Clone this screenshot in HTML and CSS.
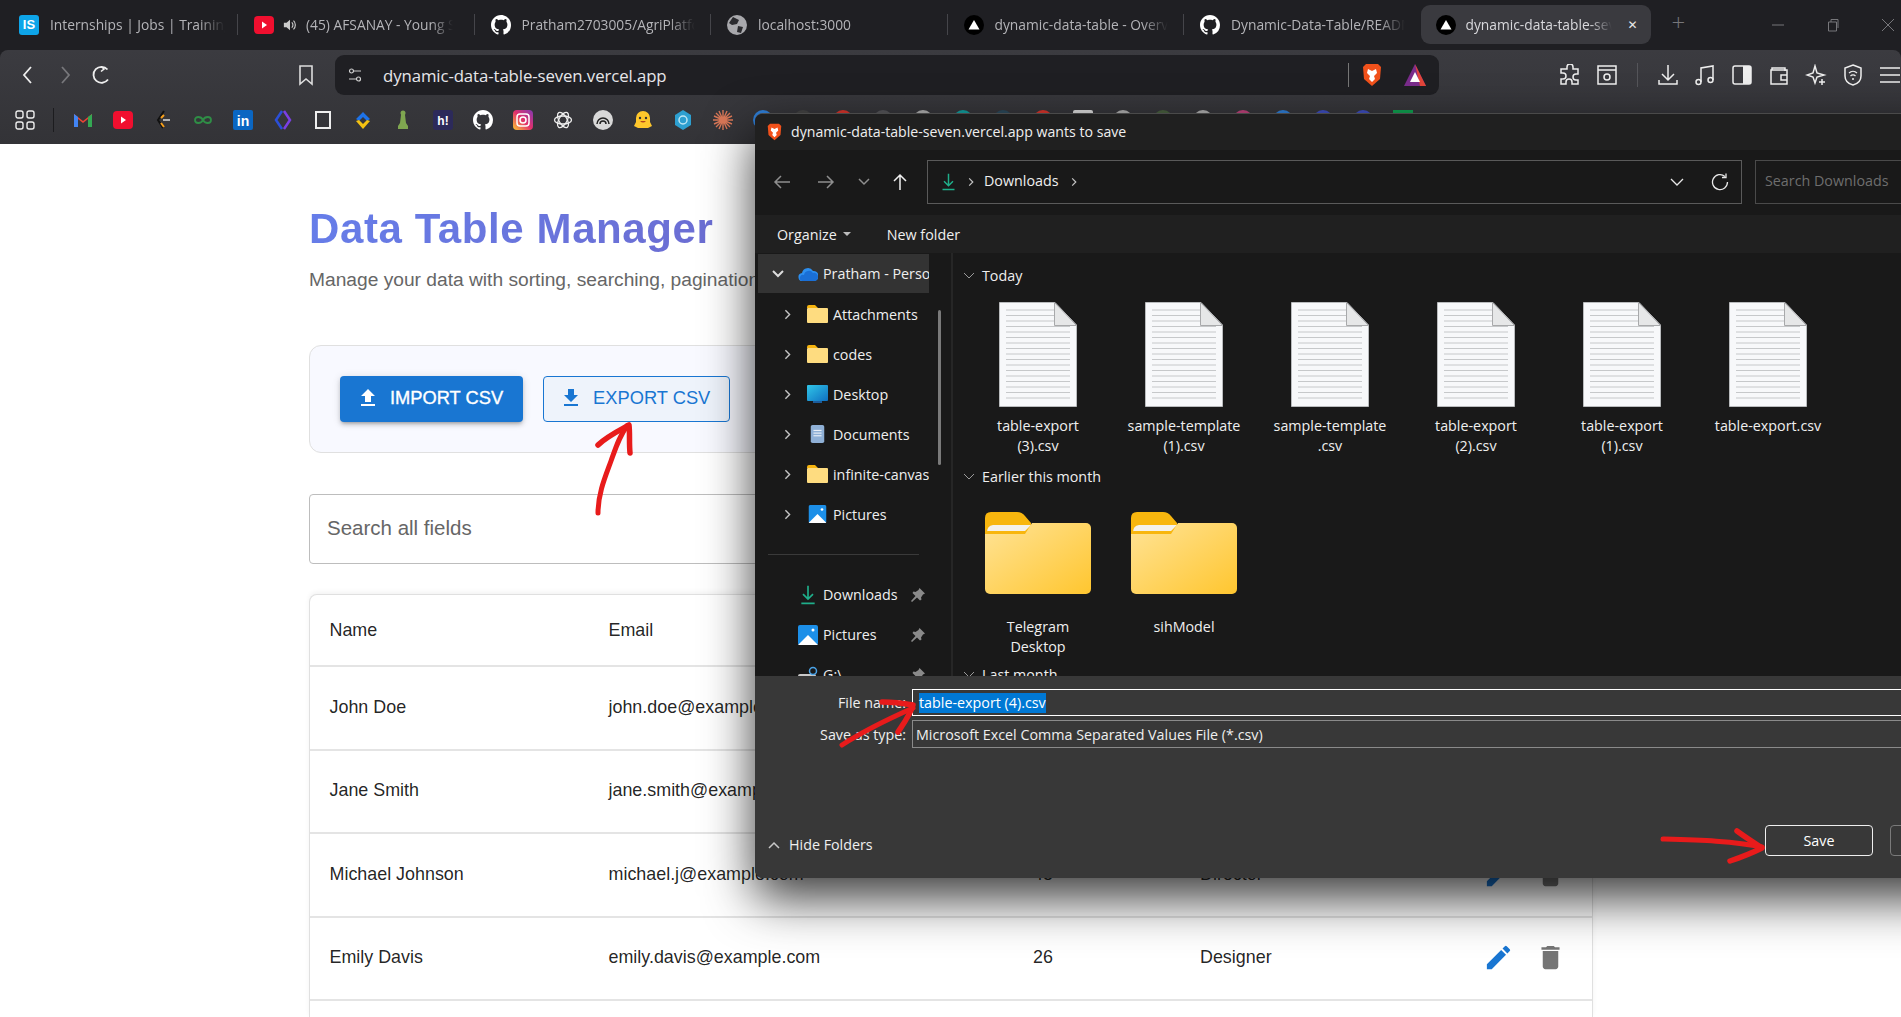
FILE: index.html
```html
<!DOCTYPE html>
<html lang="en">
<head>
<meta charset="utf-8">
<title>Data Table Manager</title>
<link rel="stylesheet" href="styles.css">
</head>
<body>
<svg class="sprites" width="0" height="0" aria-hidden="true">
  <defs>
    <symbol id="gh" viewBox="0 0 16 16"><path fill="currentColor" d="M8 0C3.58 0 0 3.58 0 8c0 3.54 2.29 6.53 5.47 7.59.4.07.55-.17.55-.38 0-.19-.01-.82-.01-1.49-2.01.37-2.53-.49-2.69-.94-.09-.23-.48-.94-.82-1.13-.28-.15-.68-.52-.01-.53.63-.01 1.08.58 1.23.82.72 1.21 1.87.87 2.33.66.07-.52.28-.87.51-1.07-1.78-.2-3.64-.89-3.64-3.95 0-.87.31-1.59.82-2.15-.08-.2-.36-1.02.08-2.12 0 0 .67-.21 2.2.82.64-.18 1.32-.27 2-.27.68 0 1.36.09 2 .27 1.53-1.04 2.2-.82 2.2-.82.44 1.1.16 1.92.08 2.12.51.56.82 1.27.82 2.15 0 3.07-1.87 3.75-3.65 3.95.29.25.54.73.54 1.48 0 1.07-.01 1.93-.01 2.2 0 .21.15.46.55.38A8.013 8.013 0 0016 8c0-4.42-3.58-8-8-8z"/></symbol>
    <symbol id="vercel" viewBox="0 0 20 20"><circle cx="10" cy="10" r="10" fill="#000"/><path d="M10 5l5.5 9.5h-11z" fill="#fff"/></symbol>
    <symbol id="yt" viewBox="0 0 20 20"><rect y="1" width="20" height="18" rx="4" fill="#f00f2f"/><path d="M8 6.500l5 3.500-5 3.500z" fill="#fff"/></symbol>
    <symbol id="lion" viewBox="0 0 20 24"><path d="M4 1h12l3 3-1 12-8 7-8-7L1 4z" fill="#f1511b"/><path d="M6 6l4 2 4-2 1 4-3 3 1 3-3 3-3-3 1-3-3-3z" fill="#fff"/></symbol>
    <symbol id="file" viewBox="0 0 78 105">
      <path d="M.5.5H56L77.500 23V104.500H.5z" fill="#f7f8fa" stroke="#b9bbbd"/>
      <path d="M7 8h48M7 13.500h48M7 19h48M7 24.500h64M7 30h64M7 35.500h64M7 41h64M7 46.500h64M7 52h64M7 57.500h64M7 63h64M7 68.500h64M7 74h64M7 79.500h64M7 85h64M7 90.500h64M7 96h64" stroke="#c6c8ca" fill="none"/>
      <path d="M55.500.5V23.500H77.500z" fill="#e6e7e8" stroke="#a8a9ab"/>
    </symbol>
    <symbol id="folder" viewBox="0 0 106 82">
      <path d="M0 6q0-6 6-6h26q5 0 8 4l6 7v30H0z" fill="#f8b60e"/>
      <path d="M2 20q0-6 6-7h38l-6 6H2z" fill="#f4f1ea"/>
      <rect y="11" width="106" height="71" rx="5" fill="url(#fg)" clip-path="url(#fc)"/>
      <linearGradient id="fg" x1="0" y1="0" x2="1" y2="1"><stop offset="0" stop-color="#ffe396"/><stop offset="1" stop-color="#ffc62f"/></linearGradient>
      <clipPath id="fc"><path d="M40 22l7-11h59v71H0V22z"/></clipPath>
    </symbol>
    <symbol id="minifolder" viewBox="0 0 21 18"><path d="M0 2q0-2 2-2h6l3 3H0z" fill="#f6b40e"/><rect y="3" width="21" height="15" rx="1" fill="#fedc80"/></symbol>
    <symbol id="pics" viewBox="0 0 20 20"><rect width="20" height="20" rx="2" fill="#1c8fe8"/><path d="M0 20l10-10 10 10z" fill="#fff"/><circle cx="15" cy="5" r="1.500" fill="#fff"/></symbol>
    <symbol id="pin" viewBox="0 0 16 16"><path d="M9.500 1l5.500 5.500-2 1-2 3 .5 2-1.500 1-3-3L2 15l-1-1 4.500-5-3-3 1-1.500 2 .5 3-2z" fill="#8a8a8a"/></symbol>
    <symbol id="gt" viewBox="0 0 10 16"><path d="M2 2l6 6-6 6" fill="none" stroke="#c4c4c4" stroke-width="2"/></symbol>
    <symbol id="dl" viewBox="0 0 20 24"><path d="M10 1v15M4 11l6 6 6-6M2 22h16" fill="none" stroke="#1fae8a" stroke-width="2"/></symbol>
  </defs>
</svg>

<header class="chrome">
  <div class="tabstrip">
    <div class="tab tab-first">
      <span class="fav-is">IS</span><span class="tab-title">Internships | Jobs | Training</span>
    </div>
    <div class="tab tab-audio">
      <svg class="fav"><use href="#yt"/></svg>
      <svg class="speaker" viewBox="0 0 16 16"><path d="M1 5.500h3l4-3.500v12l-4-3.500H1z" fill="#ccc"/><path d="M10 5a4 4 0 010 6M12 3a7 7 0 010 10" fill="none" stroke="#ccc" stroke-width="1.300"/></svg>
      <span class="tab-title">(45) AFSANAY - Young Stunners</span>
    </div>
    <div class="tab">
      <svg class="fav fav-gh"><use href="#gh"/></svg><span class="tab-title">Pratham2703005/AgriPlatform</span>
    </div>
    <div class="tab">
      <svg class="fav" viewBox="0 0 20 20"><circle cx="10" cy="10" r="10" fill="#a8a8ac"/><path d="M6 2l6 3-2 4-5 1-3-2zM11 11l5 1-2 6-4-1z" fill="#2a2a2e"/></svg><span class="tab-title">localhost:3000</span>
    </div>
    <div class="tab">
      <svg class="fav"><use href="#vercel"/></svg><span class="tab-title">dynamic-data-table - Overview</span>
    </div>
    <div class="tab tab-last">
      <svg class="fav fav-gh"><use href="#gh"/></svg><span class="tab-title">Dynamic-Data-Table/README.md</span>
    </div>
    <div class="tab tab-active">
      <svg class="fav"><use href="#vercel"/></svg><span class="tab-title">dynamic-data-table-seven</span><span class="tab-close">✕</span>
    </div>
    <span class="tab-new">+</span>
    <div class="winctl">
      <svg viewBox="0 0 14 14"><path d="M1 7h12" stroke="#77777b"/></svg>
      <svg viewBox="0 0 14 14"><path d="M2.500 4h8v9h-8zM5 4V1.500h7V10" fill="none" stroke="#77777b"/></svg>
      <svg viewBox="0 0 14 14"><path d="M1 1l12 12M13 1L1 13" stroke="#77777b"/></svg>
    </div>
  </div>

  <div class="toolbar">
    <div class="addr-row">
      <svg class="tb-icon" viewBox="0 0 20 20"><path d="M13 2L6 10l7 8" fill="none" stroke="#eee" stroke-width="1.800"/></svg>
      <svg class="tb-icon" viewBox="0 0 20 20"><path d="M7 2l7 8-7 8" fill="none" stroke="#77777b" stroke-width="1.800"/></svg>
      <svg class="tb-icon" viewBox="0 0 20 20"><path d="M15.500 4.500a8 8 0 10.500 10" fill="none" stroke="#eee" stroke-width="1.800"/><path d="M9 1.500l3 2.500-3 2.500" fill="none" stroke="#eee" stroke-width="1.600"/></svg>
      <svg class="tb-icon tb-bookmark" viewBox="0 0 20 22"><path d="M4 2h12v18l-6-5-6 5z" fill="none" stroke="#ddd" stroke-width="1.600"/></svg>
      <div class="omnibox">
        <svg class="omni-site" viewBox="0 0 14 16"><g fill="none" stroke="#cfcfcf" stroke-width="1.200"><circle cx="3.500" cy="4" r="2"/><path d="M6 4h7M1 12h7"/><circle cx="10.500" cy="12" r="2"/></g></svg>
        <span class="omni-url">dynamic-data-table-seven.vercel.app</span>
        <span class="omni-sep"></span>
        <svg class="omni-lion"><use href="#lion"/></svg>
        <svg class="omni-tri" viewBox="0 0 22 24"><path d="M11 1l11 22H0z" fill="#7a2c8c"/><path d="M11 1l11 22H16z" fill="#e3453a"/><path d="M11 9l5 10H6z" fill="#fff"/></svg>
      </div>
      <div class="tb-right">
        <svg class="tb-r" viewBox="0 0 22 22"><path d="M8 3a3 3 0 016 0v2h5v5h-2a3 3 0 000 6h2v4h-6v-2a3 3 0 00-6 0v2H2v-5h2a3 3 0 000-6H2V5h6z" fill="none" stroke="#eee" stroke-width="1.500"/></svg>
        <svg class="tb-r" viewBox="0 0 22 22"><path d="M2 2h18v18H2zM2 6h18" fill="none" stroke="#eee" stroke-width="1.500"/><circle cx="11" cy="13" r="3" fill="none" stroke="#eee" stroke-width="1.500"/></svg>
        <span class="tb-sep"></span>
        <svg class="tb-r" viewBox="0 0 22 22"><path d="M11 1v14M5 10l6 6 6-6M2 16v4h18v-4" fill="none" stroke="#eee" stroke-width="1.500"/></svg>
        <svg class="tb-r" viewBox="0 0 22 22"><path d="M7 18V4l12-2v14" fill="none" stroke="#eee" stroke-width="1.500"/><circle cx="4.500" cy="18" r="2.500" fill="none" stroke="#eee" stroke-width="1.500"/><circle cx="16.500" cy="16" r="2.500" fill="none" stroke="#eee" stroke-width="1.500"/></svg>
        <svg class="tb-r" viewBox="0 0 22 22"><rect x="2" y="2" width="18" height="18" rx="2" fill="none" stroke="#eee" stroke-width="1.500"/><rect x="12" y="2" width="8" height="18" fill="#eee"/></svg>
        <svg class="tb-r" viewBox="0 0 22 22"><path d="M4 6V4h13v3M3 6h16v14H3zM13 11h6v5h-6z" fill="none" stroke="#eee" stroke-width="1.500"/></svg>
        <svg class="tb-r" viewBox="0 0 22 22"><path d="M10 2l2 7 7 2-7 2-2 6-2-6-6-2 6-2z" fill="none" stroke="#eee" stroke-width="1.500"/><path d="M17 15v6M14 18h6" stroke="#eee" stroke-width="1.500"/></svg>
        <svg class="tb-r" viewBox="0 0 22 22"><path d="M11 1l8 3v8c0 5-4 8-8 9-4-1-8-4-8-9V4z" fill="none" stroke="#eee" stroke-width="1.500"/><path d="M7 9a6 6 0 018 0M8.500 12a3.500 3.500 0 015 0" fill="none" stroke="#eee" stroke-width="1.200"/><circle cx="11" cy="15" r="1" fill="#eee"/></svg>
        <svg class="tb-r" viewBox="0 0 22 22"><path d="M1 4h20M1 11h20M1 18h20" stroke="#eee" stroke-width="1.500"/></svg>
      </div>
    </div>

    <div class="bookmarks">
      <svg class="bm" viewBox="0 0 20 20"><g fill="none" stroke="#eee" stroke-width="1.400"><rect x="1" y="1" width="7" height="7" rx="2"/><rect x="12" y="1" width="7" height="7" rx="2"/><rect x="1" y="12" width="7" height="7" rx="2"/><rect x="12" y="12" width="7" height="7" rx="2"/></g></svg>
      <span class="bm-sep"></span>
      <svg class="bm" viewBox="0 0 20 20"><path d="M1 4l9 7 9-7v13h-4V9l-5 4-5-4v8H1z" fill="#ea4335"/><path d="M1 4v13h4V7z" fill="#4285f4"/><path d="M19 4v13h-4V7z" fill="#34a853"/></svg>
      <svg class="bm"><use href="#yt"/></svg>
      <svg class="bm" viewBox="0 0 20 20"><path d="M11 1L5 10l5 8" fill="none" stroke="#111" stroke-width="2"/><path d="M8 8l3-3M8 13l3 4" stroke="#f79f1b" stroke-width="2"/><path d="M10 10h7" stroke="#b3b3b3" stroke-width="2"/></svg>
      <svg class="bm" viewBox="0 0 20 20"><path d="M10 10c-2-4-8-4-8 0s6 4 8 0 8-4 8 0-6 4-8 0z" fill="none" stroke="#2f8d46" stroke-width="1.800"/></svg>
      <svg class="bm" viewBox="0 0 20 20"><rect width="20" height="20" rx="2" fill="#0a66c2"/><text x="10" y="16" text-anchor="middle" class="bm-in">in</text></svg>
      <svg class="bm" viewBox="0 0 20 20"><path d="M9 1L3 10l6 9" fill="none" stroke="#2b4fd8" stroke-width="2.500"/><path d="M11 1l6 9-6 9" fill="none" stroke="#7b3fe4" stroke-width="2.500"/></svg>
      <svg class="bm" viewBox="0 0 20 20"><rect x="3" y="2" width="14" height="16" fill="none" stroke="#eee" stroke-width="2"/></svg>
      <svg class="bm" viewBox="0 0 20 20"><path d="M3 9l7-7 7 7-3 2-4-4-4 4z" fill="#1e73e8"/><path d="M3 11l7 8 7-8-3-1-4 4-4-4z" fill="#f5c211"/></svg>
      <svg class="bm" viewBox="0 0 20 20"><circle cx="10" cy="3" r="2.500" fill="#7fa650"/><path d="M8 5h4l1 8 2 3v3H5v-3l2-3z" fill="#7fa650"/></svg>
      <svg class="bm" viewBox="0 0 20 20"><rect width="20" height="20" rx="3" fill="#2c2a5a"/><text x="10" y="15" text-anchor="middle" class="bm-h">h!</text></svg>
      <svg class="bm bm-white"><use href="#gh"/></svg>
      <svg class="bm" viewBox="0 0 20 20"><defs><linearGradient id="ig" x1="0" y1="1" x2="1" y2="0"><stop offset="0" stop-color="#fdc830"/><stop offset=".5" stop-color="#e1306c"/><stop offset="1" stop-color="#833ab4"/></linearGradient></defs><rect width="20" height="20" rx="4" fill="url(#ig)"/><rect x="4" y="4" width="12" height="12" rx="3" fill="none" stroke="#fff" stroke-width="1.500"/><circle cx="10" cy="10" r="3" fill="none" stroke="#fff" stroke-width="1.500"/></svg>
      <svg class="bm" viewBox="0 0 20 20"><g fill="none" stroke="#eee" stroke-width="1.300"><ellipse cx="10" cy="10" rx="8.500" ry="4"/><ellipse cx="10" cy="10" rx="8.500" ry="4" transform="rotate(60 10 10)"/><ellipse cx="10" cy="10" rx="8.500" ry="4" transform="rotate(120 10 10)"/></g></svg>
      <svg class="bm" viewBox="0 0 20 20"><circle cx="10" cy="10" r="10" fill="#d8d8d8"/><path d="M4 14a6 6 0 0112 0M7 14a3 3 0 016 0" fill="none" stroke="#222" stroke-width="1.500"/></svg>
      <svg class="bm" viewBox="0 0 20 20"><path d="M10 1a7 7 0 017 7v4l2 4-4 2H5l-4-2 2-4V8a7 7 0 017-7z" fill="#ffc72c"/><circle cx="7" cy="8" r="1.200" fill="#333"/><circle cx="13" cy="8" r="1.200" fill="#333"/><path d="M7 11q3 3 6 0" fill="#b5451b"/></svg>
      <svg class="bm" viewBox="0 0 20 20"><path d="M10 0l8 5v10l-8 5-8-5V5z" fill="#2d9fd0"/><circle cx="10" cy="10" r="4" fill="none" stroke="#bde6f5" stroke-width="1.500"/></svg>
      <svg class="bm" viewBox="0 0 20 20"><path d="M10 0v20M0 10h20M3 3l14 14M17 3L3 17M6 1l8 18M14 1L6 19M1 6l18 8M19 6L1 14" stroke="#d97757" stroke-width="1.400"/></svg>
      <span class="dot dot-blue"></span><span class="dot dot-dark"></span><span class="dot dot-red"></span><span class="dot dot-grey"></span><span class="dot dot-lt"></span><span class="dot dot-teal"></span><span class="dot dot-navy"></span><span class="dot dot-red"></span><span class="dot dot-sq"></span><span class="dot dot-lt"></span><span class="dot dot-olive"></span><span class="dot dot-lt"></span><span class="dot dot-pink"></span><span class="dot dot-blue"></span><span class="dot dot-ind"></span><span class="dot dot-ind"></span><span class="dot dot-green"></span>
    </div>
  </div>
</header>

<main class="page">
  <h1 class="title">Data Table Manager</h1>
  <p class="subtitle">Manage your data with sorting, searching, pagination, and CSV import/export</p>

  <section class="actions">
    <button class="btn btn-solid">
      <svg class="btn-icon" viewBox="0 0 24 24"><path fill="currentColor" d="M9 16h6v-6h4l-7-7-7 7h4zm-4 2h14v2H5z"/></svg>IMPORT CSV
    </button>
    <button class="btn btn-outline">
      <svg class="btn-icon" viewBox="0 0 24 24"><path fill="currentColor" d="M19 9h-4V3H9v6H5l7 7 7-7zM5 18v2h14v-2H5z"/></svg>EXPORT CSV
    </button>
  </section>

  <div class="search">Search all fields</div>

  <div class="table-wrap">
    <table class="grid">
      <colgroup><col class="c-name"><col class="c-email"><col class="c-age"><col class="c-role"><col></colgroup>
      <thead><tr><th>Name</th><th>Email</th><th>Age</th><th>Role</th><th>Actions</th></tr></thead>
      <tbody>
        <tr><td>John Doe</td><td>john.doe@example.com</td><td></td><td></td><td></td></tr>
        <tr><td>Jane Smith</td><td>jane.smith@example.com</td><td></td><td></td><td></td></tr>
        <tr><td>Michael Johnson</td><td>michael.j@example.com</td><td>45</td><td>Director</td><td><div class="row-actions">
          <svg class="act act-edit" viewBox="0 0 24 24"><path fill="currentColor" d="M3 17.250V21h3.750L17.810 9.940l-3.750-3.750L3 17.250zM20.710 7.040a1 1 0 000-1.410l-2.340-2.340a1 1 0 00-1.410 0l-1.830 1.830 3.750 3.750 1.830-1.830z"/></svg>
          <svg class="act act-del" viewBox="0 0 24 24"><path fill="currentColor" d="M6 19c0 1.100.9 2 2 2h8c1.100 0 2-.9 2-2V7H6v12zM19 4h-3.500l-1-1h-5l-1 1H5v2h14V4z"/></svg>
        </div></td></tr>
        <tr><td>Emily Davis</td><td>emily.davis@example.com</td><td>26</td><td>Designer</td><td><div class="row-actions">
          <svg class="act act-edit" viewBox="0 0 24 24"><path fill="currentColor" d="M3 17.250V21h3.750L17.810 9.940l-3.750-3.750L3 17.250zM20.710 7.040a1 1 0 000-1.410l-2.340-2.340a1 1 0 00-1.410 0l-1.830 1.830 3.750 3.750 1.830-1.830z"/></svg>
          <svg class="act act-del" viewBox="0 0 24 24"><path fill="currentColor" d="M6 19c0 1.100.9 2 2 2h8c1.100 0 2-.9 2-2V7H6v12zM19 4h-3.500l-1-1h-5l-1 1H5v2h14V4z"/></svg>
        </div></td></tr>
      </tbody>
    </table>
  </div>
</main>

<section class="dialog">
  <div class="dlg-title">
    <svg class="dlg-lion"><use href="#lion"/></svg>
    <span class="lift">dynamic-data-table-seven.vercel.app wants to save</span>
  </div>
  <div class="dlg-nav">
    <span class="nav-btn w36"><svg viewBox="0 0 18 18"><path d="M17 9H2M8 3L2 9l6 6" fill="none" stroke="#8e8e8e" stroke-width="1.500"/></svg></span>
    <span class="nav-btn w52"><svg viewBox="0 0 18 18"><path d="M1 9h15M10 3l6 6-6 6" fill="none" stroke="#8e8e8e" stroke-width="1.500"/></svg></span>
    <span class="nav-btn w24"><svg class="sm" viewBox="0 0 14 14"><path d="M2 4l5 5 5-5" fill="none" stroke="#8e8e8e" stroke-width="1.500"/></svg></span>
    <span class="nav-btn w48"><svg viewBox="0 0 18 18"><path d="M9 17V2M3 8l6-6 6 6" fill="none" stroke="#f0f0f0" stroke-width="1.500"/></svg></span>
    <div class="path-box">
      <svg class="path-dl"><use href="#dl"/></svg>
      <svg class="path-gt"><use href="#gt"/></svg>
      <span class="lift">Downloads</span>
      <svg class="path-gt"><use href="#gt"/></svg>
      <svg class="path-drop" viewBox="0 0 14 14"><path d="M1 4l6 6 6-6" fill="none" stroke="#e8e8e8" stroke-width="1.300"/></svg>
      <svg class="path-ref" viewBox="0 0 18 18"><path d="M14 3.500A7.500 7.500 0 1016.500 9" fill="none" stroke="#e8e8e8" stroke-width="1.300"/><path d="M15 .5v4h-4" fill="none" stroke="#e8e8e8" stroke-width="1.300"/></svg>
    </div>
    <div class="search-box"><span class="lift">Search Downloads</span></div>
  </div>
  <div class="dlg-tools">
    <span class="tool">Organize<i class="caret"></i></span>
    <span class="tool tool-new">New folder</span>
  </div>
  <div class="dlg-body">
    <nav class="side">
      <div class="side-list">
        <div class="side-row side-top"><svg class="side-chev-down" viewBox="0 0 14 10"><path d="M2 2l5 5 5-5" fill="none" stroke="#ddd" stroke-width="2"/></svg><svg class="side-ico-cloud" viewBox="0 0 20 14"><path d="M5 14a4 4 0 01-1-8 6 6 0 0111-2 5 5 0 011 10z" fill="#2c8ff0"/><path d="M4 14a3 3 0 012-6 5 5 0 019-2 4 4 0 015 4 4 4 0 01-4 4z" fill="#1a6fd6"/></svg><span class="side-text">Pratham - Personal</span></div>
        <div class="side-row"><svg class="side-chev"><use href="#gt"/></svg><svg class="side-ico"><use href="#minifolder"/></svg><span class="side-text">Attachments</span></div>
        <div class="side-row"><svg class="side-chev"><use href="#gt"/></svg><svg class="side-ico"><use href="#minifolder"/></svg><span class="side-text">codes</span></div>
        <div class="side-row"><svg class="side-chev"><use href="#gt"/></svg><svg class="side-ico" viewBox="0 0 21 18"><defs><linearGradient id="dk" x1="0" y1="0" x2="1" y2="1"><stop offset="0" stop-color="#30c6e8"/><stop offset="1" stop-color="#0f6fc0"/></linearGradient></defs><rect width="21" height="16" rx="1" fill="url(#dk)"/><path d="M6 16h9v2H6z" fill="#1b5c9c"/></svg><span class="side-text">Desktop</span></div>
        <div class="side-row"><svg class="side-chev"><use href="#gt"/></svg><svg class="side-ico" viewBox="0 0 21 20"><rect x="3" width="15" height="20" rx="2" fill="#8fb0d6"/><path d="M6 6h9M6 9h9M6 12h9" stroke="#fff"/></svg><span class="side-text">Documents</span></div>
        <div class="side-row"><svg class="side-chev"><use href="#gt"/></svg><svg class="side-ico"><use href="#minifolder"/></svg><span class="side-text">infinite-canvas</span></div>
        <div class="side-row"><svg class="side-chev"><use href="#gt"/></svg><svg class="side-ico" viewBox="-1 0 22 20"><use href="#pics" width="20" height="20"/></svg><span class="side-text">Pictures</span></div>
        <div class="side-rule"></div>
        <div class="side-row side-pinned"><svg class="pin-ico"><use href="#dl"/></svg><span class="side-text lift">Downloads</span><svg class="pin"><use href="#pin"/></svg></div>
        <div class="side-row side-pinned"><svg class="pin-ico"><use href="#pics"/></svg><span class="side-text lift">Pictures</span><svg class="pin"><use href="#pin"/></svg></div>
        <div class="side-row side-pinned"><svg class="pin-ico" viewBox="0 0 20 20"><rect y="9" width="18" height="9" rx="2" fill="#c9c9c9"/><circle cx="15" cy="6" r="3.500" fill="none" stroke="#4aa3e8" stroke-width="1.500"/></svg><span class="side-text lift">G:\</span><svg class="pin"><use href="#pin"/></svg></div>
      </div>
      <span class="side-thumb"></span>
    </nav>
    <div class="files">
      <div class="group-head"><svg viewBox="0 0 12 8"><path d="M1 1l5 5 5-5" fill="none" stroke="#9a9a9a"/></svg><span class="lift">Today</span></div>
      <div class="file-grid">
        <div class="item"><svg class="doc"><use href="#file"/></svg><span class="label">table-export<br>(3).csv</span></div>
        <div class="item"><svg class="doc"><use href="#file"/></svg><span class="label">sample-template<br>(1).csv</span></div>
        <div class="item"><svg class="doc"><use href="#file"/></svg><span class="label">sample-template<br>.csv</span></div>
        <div class="item"><svg class="doc"><use href="#file"/></svg><span class="label">table-export<br>(2).csv</span></div>
        <div class="item"><svg class="doc"><use href="#file"/></svg><span class="label">table-export<br>(1).csv</span></div>
        <div class="item"><svg class="doc"><use href="#file"/></svg><span class="label">table-export.csv</span></div>
      </div>
      <div class="group-head group-2"><svg viewBox="0 0 12 8"><path d="M1 1l5 5 5-5" fill="none" stroke="#9a9a9a"/></svg><span class="lift">Earlier this month</span></div>
      <div class="file-grid folder-grid">
        <div class="item"><svg class="fold"><use href="#folder"/></svg><span class="label label-fold">Telegram<br>Desktop</span></div>
        <div class="item"><svg class="fold"><use href="#folder"/></svg><span class="label label-fold">sihModel</span></div>
      </div>
      <div class="group-head group-3"><svg viewBox="0 0 12 8"><path d="M1 1l5 5 5-5" fill="none" stroke="#9a9a9a"/></svg><span class="lift">Last month</span></div>
    </div>
  </div>
  <div class="dlg-bottom">
    <div class="fields">
      <label class="f-label">File name:</label>
      <div class="f-input f-active"><span class="selected">table-export (4).csv</span></div>
      <label class="f-label">Save as type:</label>
      <div class="f-input">Microsoft Excel Comma Separated Values File (*.csv)</div>
    </div>
    <div class="dlg-foot">
      <span class="hide-folders"><svg viewBox="0 0 12 8"><path d="M1 7l5-5 5 5" fill="none" stroke="#c8c8c8" stroke-width="1.500"/></svg><span class="lift">Hide Folders</span></span>
      <button class="dbtn dbtn-main">Save</button>
      <button class="dbtn">Cancel</button>
    </div>
  </div>
</section>

<svg class="marks" viewBox="0 0 1901 1017" aria-hidden="true">
  <g fill="none" stroke="#e81b1b" stroke-width="5" stroke-linecap="round" stroke-linejoin="round">
    <path d="M598 513c0-20 8-38 13-52 5-14 8-24 16-35"/>
    <path d="M598 445c8-8 20-14 31-20 1 8 0 18 1 28" stroke-width="5.500"/>
    <path d="M842 745c20-13 44-25 71-37"/>
    <path d="M882 702c10 0 20 1 31 3-3 10-9 18-15 27" stroke-width="5.500"/>
    <path d="M1663 839c35 1 72 2 99 8"/>
    <path d="M1737 831c8 6 16 11 25 17-10 5-20 9-32 13" stroke-width="5.500"/>
  </g>
</svg>
</body>
</html>
```

FILE: styles.css
```css
* { box-sizing: border-box; }
html, body { margin: 0; height: 100%; overflow: hidden; background: #fff; }
body { position: relative; font-family: "Liberation Sans", Arial, sans-serif; }
.sprites { position: absolute; }

/* browser chrome */
.chrome { height: 144px; background: #1f1f23; color: #ddd; font-family: "Open Sans", "Noto Sans", sans-serif; }
.tabstrip { display: flex; align-items: flex-start; height: 50px; padding-left: 3px; }
.tab { position: relative; flex: none; display: flex; align-items: center; gap: 11px; width: 236.500px; height: 39px; margin-top: 5px; padding: 0 16px; }
.tab-first { width: 235px; padding-right: 13px; }
.tab::after { content: ""; position: absolute; right: 0; top: 9px; height: 21px; width: 1px; background: #45454a; }
.tab-last::after, .tab-active::after { display: none; }
.tab-audio { gap: 10px; padding-right: 22px; }
.tab-active { width: 230px; background: #3a3a3f; border-radius: 9px; padding: 0 13px 0 15px; gap: 10px; }
.tab-title { flex: 1; min-width: 0; overflow: hidden; white-space: nowrap; font-size: 13.800px; color: #b4b4b8; -webkit-mask-image: linear-gradient(to right, #000 85%, transparent); mask-image: linear-gradient(to right, #000 85%, transparent); }
.tab-active .tab-title { color: #d8d8dc; }
.fav { flex: none; width: 20px; height: 20px; }
.fav-gh { color: #fff; }
.fav-is { flex: none; width: 20px; height: 20px; background: #0ea5e9; border-radius: 3px; color: #fff; font: 700 13px/20px "Liberation Sans", sans-serif; text-align: center; }
.speaker { flex: none; width: 14px; height: 14px; margin: 0 -1px 0 -1px; }
.tab-close { flex: none; margin-left: 5px; font-size: 12px; color: #e8e8e8; font-family: "DejaVu Sans", sans-serif; }
.tab-new { flex: none; margin: 7px 0 0 21px; font-size: 24px; line-height: 30px; color: #77777b; font-weight: 300; }
.winctl { display: flex; margin-left: 86px; gap: 41px; padding-top: 18px; }
.winctl svg { width: 14px; height: 14px; }

.toolbar { height: 94px; background: linear-gradient(#3b3b40, #333337); border-radius: 8px 8px 0 0; }
.addr-row { display: flex; align-items: center; height: 50px; padding: 0 0 0 18px; gap: 17px; }
.tb-icon { flex: none; width: 20px; height: 20px; }
.tb-bookmark { margin-left: 167px; height: 22px; }
.omnibox { flex: none; display: flex; align-items: center; width: 1104px; height: 40px; margin: 0 0 0 2px; padding: 0 13px; background: #1f1f23; border-radius: 9px; }
.omni-site { flex: none; width: 14px; height: 16px; margin-right: 21px; }
.omni-url { font-size: 16.800px; color: #e6e6ea; white-space: nowrap; letter-spacing: -.1px; }
.omni-sep { width: 1px; height: 24px; background: #777; margin-left: auto; margin-right: 13px; }
.omni-lion { flex: none; width: 20px; height: 24px; }
.omni-tri { flex: none; width: 22px; height: 24px; margin-left: 22px; }
.tb-right { display: flex; align-items: center; gap: 15px; margin-left: 103px; }
.tb-r { flex: none; width: 22px; height: 22px; }
.tb-sep { flex: none; width: 1px; height: 24px; background: #55555a; margin: 0 4px; }

.bookmarks { display: flex; align-items: center; gap: 20px; height: 40px; padding: 0 0 0 15px; overflow: hidden; }
.bm { flex: none; width: 20px; height: 20px; }
.bm-white { color: #fff; }
.bm-in { font: 700 14px "Liberation Sans", sans-serif; fill: #fff; }
.bm-h { font: 700 12px "Liberation Sans", sans-serif; fill: #fff; }
.bm-sep { flex: none; width: 1px; height: 24px; background: #1c1c1f; margin: 0 -1px 0 -2px; }
.dot { flex: none; width: 20px; height: 20px; border-radius: 50%; background: #888; }
.dot-blue { background: #2f7fd8; } .dot-dark { background: #444; } .dot-red { background: #d9352c; }
.dot-grey { background: #56565a; } .dot-lt { background: #b0b0b0; } .dot-teal { background: #129f9f; }
.dot-navy { background: #2c4a5c; } .dot-sq { background: #dcdcdc; border-radius: 2px; } .dot-olive { background: #49603f; }
.dot-pink { background: #c0447c; } .dot-ind { background: #3f4fc0; } .dot-green { background: #10a150; border-radius: 0; }

/* page */
.page { width: 1284px; margin: 0 0 0 309px; padding-top: 61px; color: rgba(0,0,0,.87); }
.title { margin: 0; font-size: 42px; line-height: 48px; font-weight: 700; letter-spacing: .6px; background: linear-gradient(135deg, #667eea, #764ba2); -webkit-background-clip: text; background-clip: text; color: transparent; }
.subtitle { margin: 14px 0 0; font-size: 19.200px; line-height: 26px; color: #666; white-space: nowrap; }
.actions { display: flex; gap: 20px; margin-top: 52px; padding: 30px; height: 108px; background: #f8f9ff; border: 1px solid #e0e0e0; border-radius: 12px; }
.btn { display: flex; align-items: center; gap: 10px; height: 46px; border-radius: 4px; font: 18.300px "Liberation Sans", sans-serif; white-space: nowrap; }
.btn-solid { padding: 0 20px 2px 16px; background: #1976d2; color: #fff; border: 0; -webkit-text-stroke: .35px #fff; box-shadow: 0 3px 3px -2px rgba(0,0,0,.2), 0 3px 4px rgba(0,0,0,.14), 0 1px 8px rgba(0,0,0,.12); }
.btn-outline { padding: 0 19px 2px 15px; background: #eef3fb; color: #1976d2; border: 1px solid #1976d2; }
.btn-icon { flex: none; width: 24px; height: 24px; }
.search { display: flex; align-items: center; height: 70px; margin-top: 41px; padding: 0 0 2px 17px; border: 1px solid #bdbdbd; border-radius: 4px; font-size: 20.500px; color: #666; }
.table-wrap { height: 423px; margin-top: 30px; background: #fff; border: 1px solid #e0e0e0; border-bottom: 0; border-radius: 8px 8px 0 0; box-shadow: 0 -2px 5px rgba(0,0,0,.05); }
.grid { width: 100%; table-layout: fixed; border-collapse: collapse; font-size: 17.900px; }
.c-name { width: 279px; } .c-email { width: 424.500px; } .c-age { width: 167px; } .c-role { width: 287px; }
.grid th { height: 71px; padding: 0 20px 0 19.500px; text-align: left; font-weight: 400; border-bottom: 2px solid #e4e4e4; }
.grid td { height: 83.500px; padding: 0 20px 1px 19.500px; border-bottom: 2px solid #e4e4e4; white-space: nowrap; }
.row-actions { display: flex; gap: 21px; margin-left: -4px; align-items: center; }
.act { flex: none; width: 31px; height: 31px; }
.act-edit { color: #1976d2; }
.act-del { color: #757575; }

/* save dialog */
.dialog { position: absolute; left: 755px; top: 113px; width: 1250px; height: 765px; display: flex; flex-direction: column; background: #191919; border-radius: 8px; box-shadow: 0 20px 50px rgba(0,0,0,.78); color: #efefef; font: 14.300px "Open Sans", "Noto Sans", sans-serif; overflow: hidden; border-top: 1px solid #4a4a4a; }
.lift { padding-bottom: 2px; }
.dlg-title { flex: none; display: flex; align-items: center; height: 36px; padding-left: 12px; gap: 9px; background: #202020; font-size: 14.150px; }
.dlg-lion { flex: none; width: 15px; height: 18px; }
.dlg-nav { flex: none; display: flex; align-items: center; height: 65px; padding: 0 0 2px 9px; background: #191919; }
.nav-btn { flex: none; display: flex; justify-content: center; align-items: center; }
.nav-btn svg { width: 18px; height: 18px; }
.nav-btn svg.sm { width: 14px; height: 14px; }
.w36 { width: 36px; } .w52 { width: 52px; } .w24 { width: 24px; } .w48 { width: 48px; }
.path-box { flex: none; display: flex; align-items: center; width: 815px; height: 44px; margin-left: 3px; padding-left: 13px; border: 1px solid #5a5a5a; font-size: 14.300px; }
.path-dl { flex: none; width: 15px; height: 18px; }
.path-gt { flex: none; width: 6px; height: 10px; margin: 0 10px 0 12px; }
.path-drop { flex: none; width: 14px; height: 14px; margin-left: auto; }
.path-ref { flex: none; width: 18px; height: 18px; margin: 0 12px 0 27px; }
.search-box { flex: none; display: flex; align-items: center; width: 400px; height: 44px; margin-left: 13px; padding-left: 9px; border: 1px solid #4a4a4a; color: #6e6e6e; }
.dlg-tools { flex: none; display: flex; align-items: center; height: 38px; padding-left: 22px; background: #202020; }
.tool { display: flex; align-items: center; gap: 6px; }
.tool-new { margin-left: 36px; }
.caret { width: 0; height: 0; border: 4px solid transparent; border-top-color: #bdbdbd; border-bottom: 0; }
.dlg-body { flex: 1; min-height: 0; display: grid; grid-template-columns: 198px 1fr; overflow: hidden; }
.side { position: relative; border-right: 2px solid #262626; overflow: hidden; height: 423px; }
.side-list { width: 174px; padding: 1px 0 0 3px; overflow: hidden; }
.side-row { display: flex; align-items: center; height: 40px; padding-left: 24px; white-space: nowrap; overflow: hidden; }
.side-top { background: #333; padding-left: 13px; height: 39px; margin-bottom: 1px; }
.side-chev { flex: none; width: 7px; height: 13px; margin: 0 16px 0 2px; }
.side-chev-down { flex: none; width: 14px; height: 10px; margin-right: 13px; }
.side-ico-cloud { flex: none; width: 20px; height: 14px; margin-right: 5px; }
.side-ico { flex: none; width: 21px; height: 18px; margin-right: 5px; }
.side-pinned { padding-left: 40px; padding-right: 3px; }
.pin-ico { flex: none; width: 20px; height: 20px; margin-right: 5px; }
.pin { flex: none; width: 16px; height: 16px; margin-left: auto; }
.side-rule { height: 1px; margin: 20px 10px; background: #3a3a3a; }
.side-thumb { position: absolute; left: 183px; top: 57px; width: 3px; height: 155px; background: #7a7a7a; border-radius: 2px; }
.files { padding: 13px 0 0 10px; height: 423px; overflow: hidden; }
.group-head { display: flex; align-items: center; gap: 7px; height: 20px; }
.group-head svg { flex: none; width: 12px; height: 8px; }
.group-2 { margin-top: 11px; }
.group-3 { margin-top: 8px; }
.file-grid { display: grid; grid-template-columns: repeat(6, 146px); margin: 16px 0 0 2px; }
.folder-grid { margin-top: 25px; }
.item { display: flex; flex-direction: column; align-items: center; }
.doc { width: 78px; height: 105px; }
.fold { width: 106px; height: 82px; }
.label { margin-top: 9px; line-height: 20px; text-align: center; white-space: nowrap; }
.label-fold { margin-top: 23px; }
.dlg-bottom { flex: none; height: 202px; display: flex; flex-direction: column; background: #383838; padding-top: 13px; }
.fields { display: grid; grid-template-columns: 151px 1fr; column-gap: 6px; row-gap: 4px; }
.f-label { display: flex; align-items: center; justify-content: flex-end; }
.f-input { display: flex; align-items: center; height: 28px; padding-left: 3px; border: 1px solid #8a8a8a; white-space: nowrap; }
.f-active { height: 27px; padding-left: 6px; border-color: #fff; }
.selected { background: #0078d4; color: #fff; line-height: 20px; }
.dlg-foot { display: flex; align-items: center; gap: 17px; margin-top: auto; padding: 0 7px 22px 13px; }
.hide-folders { display: flex; align-items: center; gap: 9px; margin: 9px auto 0 0; }
.hide-folders svg { width: 12px; height: 8px; }
.dbtn { width: 108px; height: 31px; background: #383838; border: 1px solid #7a7a7a; border-radius: 4px; color: #fff; font: inherit; }
.dbtn-main { border-color: #efefef; }

/* hand-drawn red annotations */
.marks { position: absolute; left: 0; top: 0; width: 1901px; height: 1017px; pointer-events: none; }
```
